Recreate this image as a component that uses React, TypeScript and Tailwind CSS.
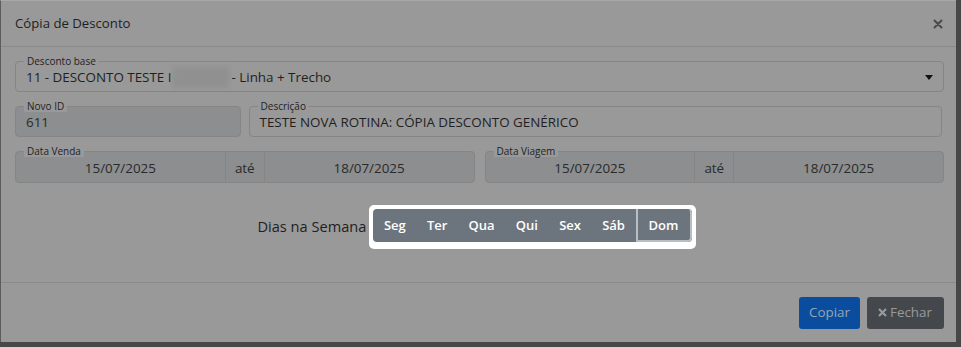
import React from "react";

const font = { fontFamily: '"Open Sans", "Noto Sans", sans-serif' };

function Field({ label, className, children }: { label: string; className?: string; children: React.ReactNode }) {
  return (
    <div className={"relative h-[31px] rounded-[4px] border border-[#858585] " + (className ?? "")}>
      <span className="absolute left-[8px] top-[-7px] bg-[#999999] px-[3px] text-[10px] leading-[12px] text-[#1f1f1f]">
        {label}
      </span>
      {children}
    </div>
  );
}

function DateRange({ label, from, to }: { label: string; from: string; to: string }) {
  return (
    <div className="relative flex h-[32px] flex-1 rounded-[4px] border border-[#858585] bg-[#8c8e8f]">
      <span className="absolute left-[8px] top-[-7px] z-10 bg-[#999999] px-[3px] text-[10px] leading-[12px] text-[#1f1f1f]">
        {label}
      </span>
      <div className="flex flex-1 items-center justify-center pt-[2px] text-[13.4px] text-[#2a2a2a]">{from}</div>
      <div className="flex w-[40px] items-center justify-center border-x border-[#858585] bg-[#8c8e8f] pt-[2px] text-[13.4px] text-[#2a2a2a]">
        até
      </div>
      <div className="flex flex-1 items-center justify-center pt-[2px] text-[13.4px] text-[#2a2a2a]">{to}</div>
    </div>
  );
}

export default function App() {
  const days = ["Seg", "Ter", "Qua", "Qui", "Sex", "Sáb"];
  return (
    <div className="h-[347px] w-[961px] overflow-hidden bg-[#474747]" style={font}>
      <div className="flex h-[342px] w-[956px] flex-col border-l border-t border-l-[#5c5c5c] border-t-[#a8a8a8] bg-[#999999]">
        {/* header */}
        <div className="flex h-[46px] items-center justify-between border-b border-[#8a8a8a] pl-[14px] pr-[12px]">
          <span className="text-[13.2px] text-[#1f1f1f]">Cópia de Desconto</span>
          <svg width="10" height="10" viewBox="0 0 10 10" className="mr-[1px]">
            <path d="M1.5 1.5 L8.5 8.5 M8.5 1.5 L1.5 8.5" stroke="#4a4a4a" strokeWidth="2" strokeLinecap="round" />
          </svg>
        </div>

        {/* body */}
        <div className="flex flex-col px-[14px] pt-[14px]">
          <Field label="Desconto base" className="w-[929px]">
            <div className="flex h-full items-center justify-between pl-[10px] pr-[10px] pt-[1px]">
              <span className="flex items-center text-[13.4px] text-[#1f1f1f]">
                11 - DESCONTO TESTE I
                <span className="mx-[2px] inline-block h-[21px] w-[56px] bg-[#909090] blur-[2px]" />
                {" "}- Linha + Trecho
              </span>
              <svg width="8" height="5" viewBox="0 0 8 5">
                <path d="M0 0 L8 0 L4 5 Z" fill="#111" />
              </svg>
            </div>
          </Field>

          <div className="mt-[14px] flex gap-[8px]">
            <Field label="Novo ID" className="w-[226px] bg-[#8c8e8f]">
              <div className="flex h-full items-center pl-[10px] pt-[2px] text-[13.4px] text-[#2a2a2a]">611</div>
            </Field>
            <Field label="Descrição" className="w-[695px]">
              <div className="flex h-full items-center pl-[10px] pt-[2px] text-[13.4px] text-[#1f1f1f]">
                TESTE NOVA ROTINA: CÓPIA DESCONTO GENÉRICO
              </div>
            </Field>
          </div>

          <div className="mt-[14px] flex w-[929px] gap-[10px]">
            <DateRange label="Data Venda" from="15/07/2025" to="18/07/2025" />
            <DateRange label="Data Viagem" from="15/07/2025" to="18/07/2025" />
          </div>

          <div className="mt-[22px] flex items-center justify-center pr-[4px]">
            <span className="mr-[3px] text-[14.6px] text-[#1f1f1f]">Dias na Semana</span>
            <div className="rounded-[5px] bg-white px-[4px] pb-[7px] pt-[4px]">
              <div className="flex h-[33px] overflow-hidden rounded-[4px] bg-[#6c757d]">
                {days.map((d) => (
                  <div key={d} className="flex items-center justify-center px-[10.6px] text-[13px] font-semibold text-white">
                    {d}
                  </div>
                ))}
                <div className="flex w-[56px] items-center justify-center rounded-r-[4px] border-b-[2px] border-l-[2px] border-r-[2px] border-[#b9bec3] pt-[2px] text-[13px] font-semibold text-white">
                  Dom
                </div>
              </div>
            </div>
          </div>
        </div>

        {/* footer */}
        <div className="mt-auto flex h-[60px] items-center justify-end gap-[7px] border-t border-[#8a8a8a] pr-[12px]">
          <button className="h-[32px] rounded-[3px] bg-[#0a4d9e] px-[10px] text-[13.4px] text-[#9aa4b2]">Copiar</button>
          <button className="flex h-[32px] items-center gap-[3px] rounded-[3px] bg-[#44484c] pl-[11px] pr-[12px] text-[13.4px] text-[#989a9c]">
            <svg width="9" height="9" viewBox="0 0 9 9">
              <path d="M1 1 L8 8 M8 1 L1 8" stroke="#989a9c" strokeWidth="2.2" />
            </svg>
            Fechar
          </button>
        </div>
      </div>
    </div>
  );
}
